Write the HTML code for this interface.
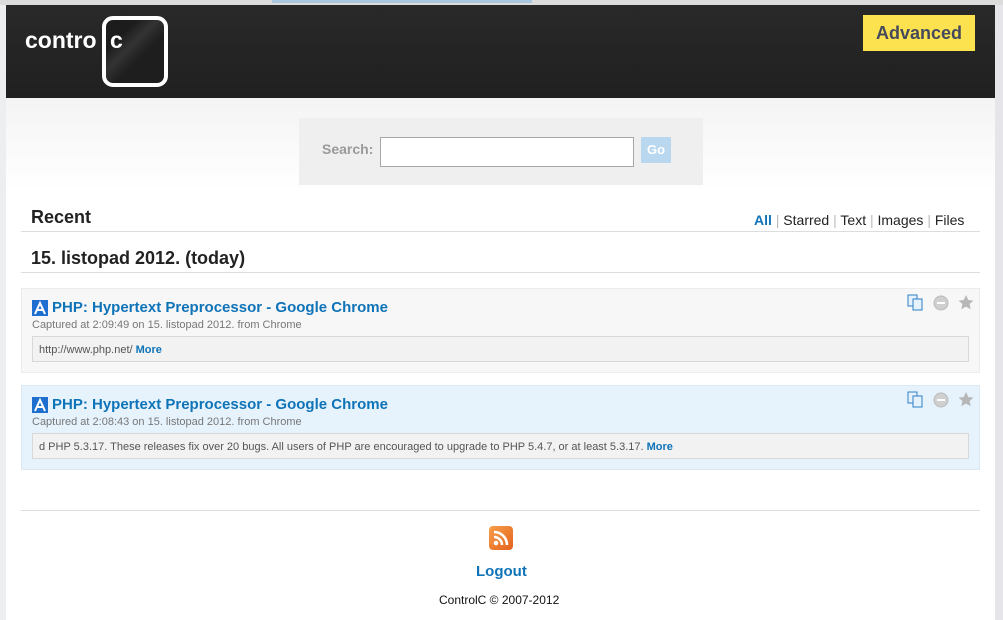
<!DOCTYPE html>
<html><head><meta charset="utf-8"><style>
*{margin:0;padding:0;box-sizing:border-box}
body{width:1003px;height:620px;overflow:hidden;font-family:"Liberation Sans",Arial,sans-serif;background:#fff;position:relative}
.abs{position:absolute}
a{color:#0f73b8;text-decoration:none}
</style></head><body>
<div class="abs" style="left:0;top:0;width:1003px;height:620px;background:linear-gradient(#e8e8e8 0,#f5f5f5 110px,#fff 190px)"></div>
<div class="abs" style="left:0;top:0;width:1003px;height:5px;background:#dcdcdc"></div>
<div class="abs" style="left:272px;top:0;width:260px;height:3px;background:#a9c8e0"></div>
<div class="abs" style="left:0;top:5px;width:6px;height:615px;background:#eceef0"></div>
<div class="abs" style="left:995px;top:5px;width:8px;height:615px;background:#e6e6ea"></div>
<div class="abs" style="left:6px;top:5px;width:989px;height:93px;background:linear-gradient(#292929,#202020)"></div>
<div class="abs" style="left:102px;top:16px;width:66px;height:71px;border:4px solid #fff;border-radius:11px;background:linear-gradient(135deg,#1c1c1c 25%,#333 42%,#1e1e1e 60%)"></div>
<div class="abs" style="left:25px;top:27px;color:#fff;font-size:23px;font-weight:bold">contro</div>
<div class="abs" style="left:110px;top:27px;color:#fff;font-size:23px;font-weight:bold">c</div>
<div class="abs" style="left:863px;top:15px;width:112px;height:36px;background:#fde24f;color:#444a5c;font-size:18px;font-weight:bold;text-align:center;line-height:36px">Advanced</div>

<div class="abs" style="left:299px;top:118px;width:404px;height:67px;background:#efefef"></div>
<div class="abs" style="left:322px;top:141px;color:#9a9a9a;font-size:14px;font-weight:bold">Search:</div>
<div class="abs" style="left:380px;top:137px;width:254px;height:30px;background:#fff;border:1px solid #a8a8a8"></div>
<div class="abs" style="left:641px;top:137px;width:30px;height:26px;background:#b9d8ef;color:#fff;font-size:13px;font-weight:bold;text-align:center;line-height:26px">Go</div>

<div class="abs" style="left:31px;top:207px;font-size:18px;font-weight:bold;color:#222">Recent</div>
<div class="abs" style="left:754px;top:212px;font-size:14px;color:#222"><a style="font-weight:bold">All</a> <span style="color:#bbb">|</span> Starred <span style="color:#bbb">|</span> Text <span style="color:#bbb">|</span> Images <span style="color:#bbb">|</span> Files</div>
<div class="abs" style="left:21px;top:231px;width:959px;height:1px;background:#ddd"></div>
<div class="abs" style="left:31px;top:248px;font-size:18px;font-weight:bold;color:#222">15. listopad 2012. (today)</div>
<div class="abs" style="left:21px;top:272px;width:959px;height:1px;background:#ddd"></div>

<div class="abs" style="left:21px;top:288px;width:959px;height:85px;background:#f7f7f7;border:1px solid #ececec"></div>
<div class="abs" style="left:21px;top:385px;width:959px;height:85px;background:#e6f3fd;border:1px solid #dbe9f5"></div>

<div class="abs" style="left:32px;top:300px;width:16px;height:16px;background:#1e6fd0"><svg width="16" height="16"><path d="M3 14 L8 3 L13 14 M5.5 10 H10.5" stroke="#fff" stroke-width="2" fill="none"/></svg></div>
<div class="abs" style="left:52px;top:299px;font-size:15px;font-weight:bold;color:#0f73b8">PHP: Hypertext Preprocessor - Google Chrome</div>
<div class="abs" style="left:32px;top:319px;font-size:11px;color:#777">Captured at 2:09:49 on 15. listopad 2012. from Chrome</div>
<div class="abs" style="left:32px;top:336px;width:937px;height:26px;background:#f2f2f2;border:1px solid #d8d8d8;font-size:11px;color:#555;padding:7px 0 0 6px">http://www.php.net/ <a style="font-weight:bold">More</a></div>

<div class="abs" style="left:32px;top:397px;width:16px;height:16px;background:#1e6fd0"><svg width="16" height="16"><path d="M3 14 L8 3 L13 14 M5.5 10 H10.5" stroke="#fff" stroke-width="2" fill="none"/></svg></div>
<div class="abs" style="left:52px;top:396px;font-size:15px;font-weight:bold;color:#0f73b8">PHP: Hypertext Preprocessor - Google Chrome</div>
<div class="abs" style="left:32px;top:416px;font-size:11px;color:#777">Captured at 2:08:43 on 15. listopad 2012. from Chrome</div>
<div class="abs" style="left:32px;top:433px;width:937px;height:26px;background:#f2f2f2;border:1px solid #d8d8d8;font-size:11px;color:#555;padding:7px 0 0 6px">d PHP 5.3.17. These releases fix over 20 bugs. All users of PHP are encouraged to upgrade to PHP 5.4.7, or at least 5.3.17. <a style="font-weight:bold">More</a></div>

<svg class="abs" style="left:906px;top:293px" width="70" height="120">
<g id="ic">
<rect x="2" y="2" width="9" height="11" fill="#e6f2fb" stroke="#2d7fc7"/>
<rect x="7" y="6" width="9" height="11" fill="#e6f2fb" stroke="#2d7fc7"/>
<circle cx="35" cy="10" r="7" fill="#cfcfcf" stroke="#bbb"/>
<rect x="31" y="9" width="8" height="2" fill="#fff"/>
<path d="M60 2 L62.3 7 L67.5 7.6 L63.6 11 L64.7 16.3 L60 13.6 L55.3 16.3 L56.4 11 L52.5 7.6 L57.7 7 Z" fill="#b7b7b7"/>
</g>
<use href="#ic" y="97"/>
</svg>

<div class="abs" style="left:21px;top:510px;width:959px;height:1px;background:#ddd"></div>
<div class="abs" style="left:489px;top:526px;width:24px;height:24px;border-radius:4px;background:linear-gradient(135deg,#f7a04a,#e4621c)"><svg width="24" height="24"><circle cx="7" cy="17" r="2.3" fill="#fff"/><path d="M5 11 A8 8 0 0 1 13 19 M5 6 A13 13 0 0 1 18 19" stroke="#fff" stroke-width="2.6" fill="none"/></svg></div>
<div class="abs" style="left:476px;top:563px;font-size:15px;font-weight:bold;color:#0f73b8">Logout</div>
<div class="abs" style="left:439px;top:593px;font-size:12px;color:#111">ControlC © 2007-2012</div>
</body></html>
